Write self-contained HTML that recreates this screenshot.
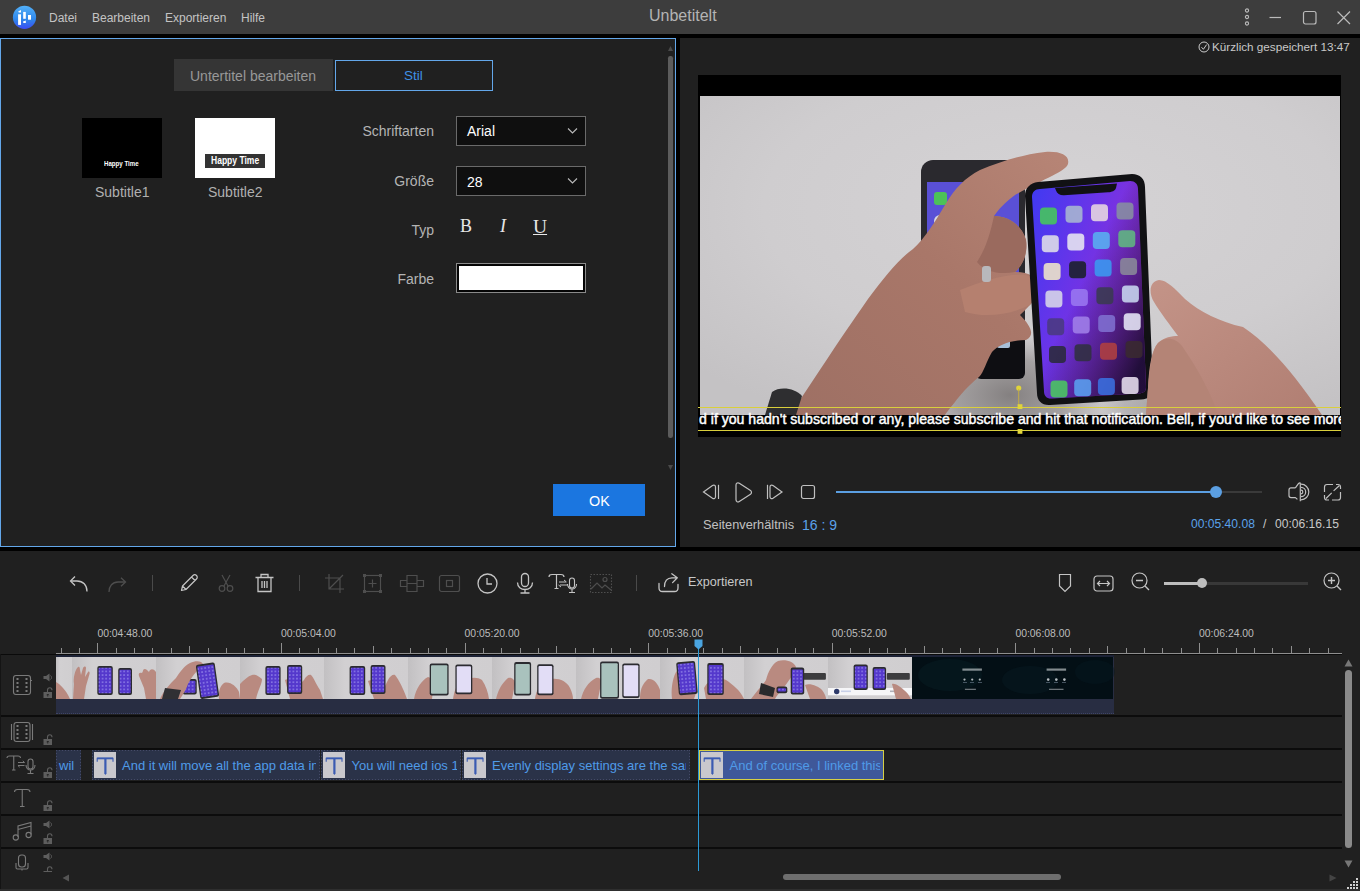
<!DOCTYPE html>
<html><head><meta charset="utf-8">
<style>
*{margin:0;padding:0;box-sizing:border-box}
html,body{width:1360px;height:891px;overflow:hidden;background:#000;font-family:"Liberation Sans",sans-serif}
.a{position:absolute}
.t{position:absolute;white-space:nowrap;line-height:1}
svg{position:absolute;overflow:visible}
</style></head><body>
<!-- TITLE BAR -->
<div class="a" style="left:0;top:0;width:1360px;height:34px;background:#3d3d3d"></div>
<svg style="left:8px;top:2px" width="32" height="30" viewBox="0 0 32 30">
 <defs><linearGradient id="lg" x1="0" y1="0" x2="0" y2="1"><stop offset="0" stop-color="#52b0f8"/><stop offset="0.6" stop-color="#2f86ea"/><stop offset="1" stop-color="#3a4cf4"/></linearGradient></defs>
 <circle cx="16.5" cy="15.3" r="11.6" fill="url(#lg)"/>
 <path d="M10.2 9.4L13 8.1V10.4H10.8Z" fill="#fff"/><rect x="10.1" y="12.3" width="2.9" height="10.6" fill="#fff"/>
 <rect x="15.2" y="9.9" width="2.6" height="6.9" fill="#fff"/><path d="M15 19.6L17.8 18.4V20.9H15.4Z" fill="#fff"/>
 <rect x="20" y="13" width="3" height="4.7" fill="#fff"/>
</svg>
<div class="t" style="left:49px;top:12px;font-size:12px;color:#c4c4c4">Datei</div>
<div class="t" style="left:92px;top:12px;font-size:12px;color:#c4c4c4">Bearbeiten</div>
<div class="t" style="left:165px;top:12px;font-size:12px;color:#c4c4c4">Exportieren</div>
<div class="t" style="left:241px;top:12px;font-size:12px;color:#c4c4c4">Hilfe</div>
<div class="t" style="left:649px;top:8px;font-size:16px;color:#b4b4b4">Unbetitelt</div>
<svg style="left:1240px;top:8px" width="14" height="18"><circle cx="7" cy="2.5" r="1.6" fill="none" stroke="#bbb" stroke-width="1.1"/><circle cx="7" cy="9" r="1.6" fill="none" stroke="#bbb" stroke-width="1.1"/><circle cx="7" cy="15.5" r="1.6" fill="none" stroke="#bbb" stroke-width="1.1"/></svg>
<svg style="left:1268px;top:10px" width="16" height="16"><line x1="1.5" y1="7.5" x2="13" y2="7.5" stroke="#bbb" stroke-width="1.2"/></svg>
<svg style="left:1302px;top:10px" width="16" height="16"><rect x="1.5" y="1.5" width="12.5" height="12.5" rx="2" fill="none" stroke="#bbb" stroke-width="1.2"/></svg>
<svg style="left:1336px;top:10px" width="16" height="16"><path d="M1.5 1.5L14 14M14 1.5L1.5 14" stroke="#bbb" stroke-width="1.2"/></svg>

<!-- LEFT PANEL -->
<div class="a" style="left:0;top:38px;width:676px;height:509px;background:#202020;border:1px solid #63a7ea"></div>
<div class="a" style="left:174px;top:59px;width:159px;height:32px;background:#353535"></div>
<div class="t" style="left:190px;top:69px;font-size:14px;color:#989898">Untertitel bearbeiten</div>
<div class="a" style="left:335px;top:60px;width:158px;height:31px;border:1px solid #63a7ea"></div>
<div class="t" style="left:404px;top:69px;font-size:13.5px;color:#3f90e4">Stil</div>

<div class="a" style="left:82px;top:118px;width:80px;height:60px;background:#000"></div>
<div class="t" style="left:104px;top:160px;font-size:7px;font-weight:bold;color:#fff;transform:scaleX(0.876);transform-origin:0 0">Happy Time</div>
<div class="a" style="left:195px;top:118px;width:80px;height:60px;background:#fff"></div>
<div class="a" style="left:205px;top:154px;width:60px;height:14px;background:#333"></div>
<div class="t" style="left:211px;top:156px;font-size:10.4px;font-weight:bold;color:#fff;transform:scaleX(0.82);transform-origin:0 0">Happy Time</div>
<div class="t" style="left:95px;top:185px;font-size:14px;color:#b0b0b0">Subtitle1</div>
<div class="t" style="left:208px;top:185px;font-size:14px;color:#b0b0b0">Subtitle2</div>

<div class="t" style="right:926px;top:124px;font-size:14px;color:#b4b4b4">Schriftarten</div>
<div class="t" style="right:926px;top:174px;font-size:14px;color:#b4b4b4">Größe</div>
<div class="t" style="right:926px;top:223px;font-size:14px;color:#b4b4b4">Typ</div>
<div class="t" style="right:926px;top:271.5px;font-size:14px;color:#b4b4b4">Farbe</div>

<div class="a" style="left:456px;top:116px;width:130px;height:30px;background:#0f0f0f;border:1px solid #6a6a6a"></div>
<div class="t" style="left:467px;top:124px;font-size:14px;color:#fff">Arial</div>
<svg style="left:567px;top:127px" width="12" height="8"><path d="M1 1.5L5.5 6L10 1.5" fill="none" stroke="#bbb" stroke-width="1.1"/></svg>
<div class="a" style="left:456px;top:166px;width:130px;height:30px;background:#0f0f0f;border:1px solid #6a6a6a"></div>
<div class="t" style="left:467px;top:175px;font-size:14px;color:#fff">28</div>
<svg style="left:567px;top:177px" width="12" height="8"><path d="M1 1.5L5.5 6L10 1.5" fill="none" stroke="#bbb" stroke-width="1.1"/></svg>

<div class="t" style="left:460px;top:217px;font-size:18px;font-family:'Liberation Serif',serif;color:#e8e8e8">B</div>
<div class="t" style="left:500px;top:217px;font-size:18px;font-family:'Liberation Serif',serif;font-style:italic;color:#e8e8e8">I</div>
<div class="t" style="left:533px;top:217px;font-size:19.5px;font-family:'Liberation Serif',serif;text-decoration:underline;color:#e8e8e8">U</div>

<div class="a" style="left:456px;top:263px;width:130px;height:30px;background:#fff;border:1px solid #8a8a8a;box-shadow:inset 0 0 0 2px #050505"></div>

<svg style="left:668px;top:46px" width="6" height="6"><path d="M0 5H5L2.5 0Z" fill="#4a4a4a"/></svg>
<div class="a" style="left:668px;top:56px;width:4.5px;height:382px;border-radius:2.2px;background:#5c5c5c"></div>
<svg style="left:668px;top:465px" width="6" height="6"><path d="M0 0H5L2.5 5Z" fill="#4a4a4a"/></svg>
<div class="a" style="left:553px;top:484px;width:92px;height:32px;background:#1b76e0"></div>
<div class="t" style="left:589px;top:494px;font-size:14.4px;color:#fff">OK</div>

<!-- RIGHT PANEL -->
<div class="a" style="left:680px;top:38px;width:680px;height:509px;background:#202020"></div>
<svg style="left:1198px;top:41px" width="12" height="12"><circle cx="6" cy="6" r="5" fill="none" stroke="#ccc" stroke-width="1"/><path d="M3.5 6.2L5.4 8.3L8.6 3.6" fill="none" stroke="#ccc" stroke-width="1"/></svg>
<div class="t" style="left:1212px;top:41px;font-size:11.7px;color:#c8c8c8">Kürzlich gespeichert 13:47</div>
<div class="a" style="left:698px;top:75px;width:643px;height:362px;background:#000;overflow:hidden">
 <svg id="vid" style="left:2px;top:21px;overflow:hidden" width="640" height="319" viewBox="700 96 640 319">
  <defs>
   <radialGradient id="bg" cx="0.55" cy="0.35" r="0.75"><stop offset="0" stop-color="#d5d3d5"/><stop offset="0.6" stop-color="#cfcdcf"/><stop offset="1" stop-color="#c4c2c4"/></radialGradient><radialGradient id="shd" cx="0.5" cy="0.5" r="0.5"><stop offset="0" stop-color="#7c7878" stop-opacity="0.9"/><stop offset="0.6" stop-color="#8a8686" stop-opacity="0.6"/><stop offset="1" stop-color="#9a9696" stop-opacity="0"/></radialGradient>
   <linearGradient id="scr" x1="0" y1="0" x2="1" y2="0.6"><stop offset="0" stop-color="#3f3af2"/><stop offset="0.45" stop-color="#6a34e8"/><stop offset="1" stop-color="#9a2fd0"/></linearGradient>
   <linearGradient id="scrd" x1="0.1" y1="0.2" x2="0.9" y2="0.9"><stop offset="0.4" stop-color="#120c30" stop-opacity="0"/><stop offset="1" stop-color="#0c0820" stop-opacity="0.85"/></linearGradient>
   <linearGradient id="skin" x1="0" y1="1" x2="1" y2="0"><stop offset="0" stop-color="#9e7064"/><stop offset="0.55" stop-color="#a97769"/><stop offset="1" stop-color="#b78576"/></linearGradient>
   <linearGradient id="skin2" x1="0" y1="0" x2="1" y2="1"><stop offset="0" stop-color="#c49488"/><stop offset="1" stop-color="#b07e72"/></linearGradient>
  </defs>
  <rect x="700" y="96" width="640" height="319" fill="url(#bg)"/><ellipse cx="1010" cy="395" rx="95" ry="60" fill="url(#shd)"/><ellipse cx="1160" cy="405" rx="60" ry="25" fill="url(#shd)" opacity="0.5"/>
  <!-- back phone -->
  <rect x="921" y="160" width="104" height="218" rx="12" fill="#2a292e"/>
  <rect x="927" y="182" width="92" height="180" fill="#5a50d6"/>
  <rect x="934" y="192" width="13" height="13" rx="3" fill="#4cc258"/>
  <rect x="1000" y="186" width="12" height="12" rx="3" fill="#8a8a9a"/>
  <rect x="934" y="215" width="12" height="12" rx="6" fill="#d8d8e0"/>
  <rect x="975" y="336" width="50" height="43" rx="6" fill="#0e0e12"/>
  <rect x="997" y="340" width="13" height="8" rx="2" fill="#a8c0d8"/>
  <!-- left hand -->
  <path d="M790 415 L800 400 C815 378 835 346 868 299 C885 276 900 258 913 249 C925 238 935 222 945 205 C955 188 965 178 980 170 C1000 162 1020 155 1045 152 C1060 151 1070 155 1068 164 C1065 172 1045 178 1015 195 C1005 202 998 210 994 216 C1008 216 1022 225 1026 240 C1028 255 1022 266 1015 272 C1030 272 1040 278 1038 290 C1035 302 1025 310 1020 315 C1030 325 1036 335 1026 340 C1010 340 998 345 992 352 C986 362 984 372 979 377 C968 386 960 395 955 402 C950 408 947 412 945 415 Z" fill="url(#skin)"/>
  <path d="M994 216 C1008 216 1022 225 1026 240 C1028 255 1022 266 1015 272 C1000 275 985 272 977 262 C985 250 990 235 994 216Z" fill="#9a6a5e"/>
  <path d="M960 290 C990 278 1015 272 1030 276 C1040 282 1040 295 1030 305 C1010 315 985 318 965 312Z" fill="#b5806f"/>
  <rect x="982" y="266" width="9" height="16" rx="3" fill="#b8b8bc"/>
  <path d="M765 415 L772 392 C780 386 795 388 802 396 L796 415Z" fill="#2e2e30"/>
  <!-- front phone -->
  <path d="M1038 182 L1132 174 C1140 174 1145 179 1145 187 L1153 388 C1153 396 1149 399 1141 399.5 L1050 405 C1042 405.5 1037 401 1037 393 L1025 196 C1025 188 1030 183 1038 182Z" fill="#111114"/>
  <path d="M1040 189 L1130 181 C1135 181 1138 184 1138 189 L1146 387 C1146 391 1144 393 1139 393.5 L1052 398.5 C1047 399 1044 396 1044 391 L1032 197 C1032 192 1035 189 1040 189Z" fill="url(#scr)"/>
  <path d="M1040 189 L1130 181 C1135 181 1138 184 1138 189 L1146 387 C1146 391 1144 393 1139 393.5 L1052 398.5 C1047 399 1044 396 1044 391 L1032 197 C1032 192 1035 189 1040 189Z" fill="url(#scrd)"/>
  <path d="M1055 188 L1117 183.5 L1116 188 C1115 191 1112 192 1108 192.3 L1064 195.3 C1060 195.5 1057 193.5 1056 190.5Z" fill="#111114"/>
  <g id="icons"><rect x="1040.0" y="207.5" width="17" height="17" rx="4" fill="#46c85a" opacity="0.88"/><rect x="1065.5" y="205.8" width="17" height="17" rx="4" fill="#a8b8d0" opacity="0.88"/><rect x="1091.0" y="204.2" width="17" height="17" rx="4" fill="#e8d8e0" opacity="0.88"/><rect x="1116.5" y="202.5" width="17" height="17" rx="4" fill="#8890a0" opacity="0.88"/><rect x="1041.8" y="235.2" width="17" height="17" rx="4" fill="#e0e0e8" opacity="0.88"/><rect x="1067.3" y="233.5" width="17" height="17" rx="4" fill="#e8e8f0" opacity="0.88"/><rect x="1092.8" y="231.9" width="17" height="17" rx="4" fill="#58b0f0" opacity="0.88"/><rect x="1118.3" y="230.2" width="17" height="17" rx="4" fill="#60b880" opacity="0.88"/><rect x="1043.6" y="262.9" width="17" height="17" rx="4" fill="#f0e8c8" opacity="0.88"/><rect x="1069.1" y="261.2" width="17" height="17" rx="4" fill="#1a2028" opacity="0.88"/><rect x="1094.6" y="259.6" width="17" height="17" rx="4" fill="#3a9af0" opacity="0.88"/><rect x="1120.1" y="257.9" width="17" height="17" rx="4" fill="#8a8a98" opacity="0.88"/><rect x="1045.4" y="290.6" width="17" height="17" rx="4" fill="#d8d8e8" opacity="0.88"/><rect x="1070.9" y="288.9" width="17" height="17" rx="4" fill="#9a78f0" opacity="0.88"/><rect x="1096.4" y="287.3" width="17" height="17" rx="4" fill="#3a3a50" opacity="0.88"/><rect x="1121.9" y="285.6" width="17" height="17" rx="4" fill="#c8d8f0" opacity="0.88"/><rect x="1047.2" y="318.3" width="17" height="17" rx="4" fill="#4a3a80" opacity="0.88"/><rect x="1072.7" y="316.6" width="17" height="17" rx="4" fill="#a080e8" opacity="0.88"/><rect x="1098.2" y="315.0" width="17" height="17" rx="4" fill="#8070d0" opacity="0.88"/><rect x="1123.7" y="313.3" width="17" height="17" rx="4" fill="#e8e8f8" opacity="0.88"/><rect x="1049.0" y="346.0" width="17" height="17" rx="4" fill="#2a2a3a" opacity="0.88"/><rect x="1074.5" y="344.3" width="17" height="17" rx="4" fill="#303040" opacity="0.88"/><rect x="1100.0" y="342.7" width="17" height="17" rx="4" fill="#b04040" opacity="0.88"/><rect x="1125.5" y="341.0" width="17" height="17" rx="4" fill="#3a2a30" opacity="0.88"/><rect x="1050.5" y="380.5" width="17" height="17" rx="4" fill="#4ac860" opacity="0.88"/><rect x="1074.2" y="379.3" width="17" height="17" rx="4" fill="#5aa0f0" opacity="0.88"/><rect x="1097.9" y="378.1" width="17" height="17" rx="4" fill="#3a70e0" opacity="0.88"/><rect x="1121.6" y="376.9" width="17" height="17" rx="4" fill="#e8e0f0" opacity="0.88"/></g>
  <!-- right hand -->
  <path d="M1146 415 L1148 388 C1149 365 1152 350 1158 343 C1164 337 1172 336 1178 336 C1170 325 1160 312 1154 302 C1148 292 1150 281 1159 280 C1167 280 1175 289 1185 299 C1200 312 1220 322 1243 327 C1270 345 1295 375 1322 415Z" fill="url(#skin2)"/>
  <path d="M1146 415 L1148 388 C1150 365 1152 350 1158 343 C1166 336 1176 338 1182 346 C1195 365 1210 390 1218 415Z" fill="#b48476"/>
 </svg>
 <div class="a" style="left:0;top:332px;width:643px;height:1px;background:#d9cf3c"></div>
 <div class="a" style="left:0;top:355px;width:643px;height:1px;background:#d9cf3c"></div>
 <div class="t" style="left:1px;top:337px;font-size:14.1px;color:#fff;-webkit-text-stroke:0.45px #fff">d if you hadn't subscribed or any, please subscribe and hit that notification. Bell, if you'd like to see more</div>
</div>
<svg style="left:1014px;top:383px" width="12" height="52"><circle cx="4.7" cy="5" r="2.6" fill="#e0d43a"/><line x1="4.7" y1="6" x2="4.7" y2="22" stroke="#c8b040" stroke-width="0.9"/><rect x="3.6" y="21.2" width="4.8" height="4.8" fill="#e0d43a"/><rect x="3.6" y="46" width="4.8" height="4.8" fill="#e0d43a"/></svg>
<!-- controls -->
<svg style="left:700px;top:482px" width="120" height="22">
 <path d="M3.5 9.9L12.5 3.6C14 2.6 15.5 3.4 15.5 5V14.8C15.5 16.4 14 17.2 12.5 16.2L3.5 9.9Z" fill="none" stroke="#c0c0c0" stroke-width="1.2" transform="translate(0,0)"/>
 <line x1="18.5" y1="2.8" x2="18.5" y2="17" stroke="#c0c0c0" stroke-width="1.2"/>
</svg>
<svg style="left:733px;top:481px" width="22" height="24"><path d="M3 4C3 2.2 4.8 1.2 6.3 2.2L17.5 9.6C18.8 10.5 18.8 12.3 17.5 13.2L6.3 20.6C4.8 21.6 3 20.6 3 18.8Z" fill="none" stroke="#c0c0c0" stroke-width="1.2"/></svg>
<svg style="left:765px;top:482px" width="22" height="22"><line x1="2.5" y1="2.8" x2="2.5" y2="17" stroke="#c0c0c0" stroke-width="1.2"/><path d="M17 9.9L8 3.6C6.5 2.6 5 3.4 5 5V14.8C5 16.4 6.5 17.2 8 16.2L17 9.9Z" fill="none" stroke="#c0c0c0" stroke-width="1.2"/></svg>
<svg style="left:800px;top:484px" width="18" height="18"><rect x="1.5" y="1.5" width="13" height="13" rx="2" fill="none" stroke="#c0c0c0" stroke-width="1.2"/></svg>
<div class="a" style="left:836px;top:491px;width:380px;height:2px;background:#5b9fe2"></div>
<div class="a" style="left:1216px;top:491px;width:46px;height:2px;background:#3a3a3a"></div>
<div class="a" style="left:1210px;top:486px;width:12px;height:12px;border-radius:50%;background:#5b9fe2"></div>
<svg style="left:1287px;top:481px" width="26" height="24" viewBox="0 0 26 24"><path d="M8.4 6.9L11.6 2.4Q12.4 1.6 13.3 2V20.2M8.4 6.9H4Q2 6.9 2 8.9V14.6Q2 16.6 4 16.6H8.4L10.4 18.4" fill="none" stroke="#c0c0c0" stroke-width="1.2" stroke-linejoin="round"/><path d="M14 9.2A1.8 1.8 0 0 1 14 12.8M14 6.3A4.7 4.7 0 0 1 14 15.7M14 3.2A7.8 7.8 0 0 1 14 18.8" fill="none" stroke="#c0c0c0" stroke-width="1.2"/></svg>
<svg style="left:1323px;top:483px" width="20" height="19" viewBox="0 0 20 19"><path d="M10 1.5H4Q1.5 1.5 1.5 4V9M1.5 12V14.5Q1.5 17 4 17H6M9 17H15Q17.5 17 17.5 14.5V9M17.5 6V4Q17.5 1.5 15 1.5H13" fill="none" stroke="#c0c0c0" stroke-width="1.2"/><path d="M3 15.5L8.7 9.8M10.6 7.9L16.2 2.8" fill="none" stroke="#c0c0c0" stroke-width="1.2"/></svg>
<div class="t" style="left:703px;top:519px;font-size:12.8px;color:#c0c0c0">Seitenverhältnis</div>
<div class="t" style="left:802px;top:518px;font-size:14px;color:#5aa2ea">16 : 9</div>
<div class="t" style="left:1191px;top:518px;font-size:12.1px;color:#5aa2ea">00:05:40.08</div>
<div class="t" style="left:1263px;top:518px;font-size:12.1px;color:#c8c8c8">/</div>
<div class="t" style="left:1275px;top:518px;font-size:12.1px;color:#c8c8c8">00:06:16.15</div>

<!-- BOTTOM AREA -->
<div class="a" style="left:0;top:551px;width:1360px;height:340px;background:#202020"></div>
<svg style="left:68px;top:573px" width="22" height="20" viewBox="0 0 22 20"><path d="M19 18.5C19 12 15 8 9 8H3" fill="none" stroke="#c4c4c4" stroke-width="1.3"/><path d="M7 3.5L2.5 8L7 12.5" fill="none" stroke="#c4c4c4" stroke-width="1.3"/></svg>
<svg style="left:107px;top:575px" width="22" height="18" viewBox="0 0 22 18"><path d="M2 17C2 11 5.5 7 11 7H18" fill="none" stroke="#4e4e4e" stroke-width="1.3"/><path d="M14 2.8L18.5 7L14 11.2" fill="none" stroke="#4e4e4e" stroke-width="1.3"/></svg>
<div class="a" style="left:152px;top:575px;width:1px;height:16px;background:#4a4a4a"></div>
<svg style="left:179px;top:573px" width="20" height="20" viewBox="0 0 20 20"><path d="M2.5 17.5L3.5 13L14 2.5C15 1.5 16.5 1.5 17.5 2.5C18.5 3.5 18.5 5 17.5 6L7 16.5Z M12.5 4L16 7.5 M3.5 13L7 16.5" fill="none" stroke="#c4c4c4" stroke-width="1.2" stroke-linejoin="round"/></svg>
<svg style="left:217px;top:573px" width="18" height="20" viewBox="0 0 18 20"><path d="M5 2L11 13M13 2L7 13" fill="none" stroke="#4e4e4e" stroke-width="1.2"/><circle cx="5" cy="15.5" r="2.8" fill="none" stroke="#4e4e4e" stroke-width="1.2"/><circle cx="13" cy="15.5" r="2.8" fill="none" stroke="#4e4e4e" stroke-width="1.2"/></svg>
<svg style="left:254px;top:572px" width="22" height="21" viewBox="0 0 22 21"><path d="M1.5 5.5H19.5M7 5.5V2.5H14V5.5M4 5.5V19.5H17V5.5M8 9V16M10.5 9V16M13 9V16" fill="none" stroke="#c4c4c4" stroke-width="1.3"/></svg>
<div class="a" style="left:299px;top:575px;width:1px;height:16px;background:#4a4a4a"></div>
<svg style="left:324px;top:573px" width="22" height="21" viewBox="0 0 22 21"><path d="M5 1V16H20M1 5H16V20M19 2L5 16" fill="none" stroke="#4e4e4e" stroke-width="1.2"/></svg>
<svg style="left:362px;top:573px" width="22" height="21" viewBox="0 0 22 21"><rect x="2.5" y="2.5" width="16" height="16" fill="none" stroke="#4e4e4e" stroke-width="1.2"/><rect x="1" y="1" width="3" height="3" fill="#4e4e4e"/><rect x="17" y="1" width="3" height="3" fill="#4e4e4e"/><rect x="1" y="17" width="3" height="3" fill="#4e4e4e"/><rect x="17" y="17" width="3" height="3" fill="#4e4e4e"/><path d="M10.5 6.5V14.5M6.5 10.5H14.5" stroke="#4e4e4e" stroke-width="1.2"/></svg>
<svg style="left:399px;top:574px" width="26" height="19" viewBox="0 0 26 19"><path d="M8 1.5H18V6.5H24.5V12.5H18V17.5H8V12.5H1.5V6.5H8Z M8 6.5V12.5 M18 6.5V12.5 M8 9.5H18" fill="none" stroke="#4e4e4e" stroke-width="1.2"/></svg>
<svg style="left:438px;top:574px" width="23" height="19" viewBox="0 0 23 19"><rect x="1.5" y="1.5" width="20" height="16" rx="2" fill="none" stroke="#4e4e4e" stroke-width="1.2"/><rect x="8.5" y="6.5" width="6" height="6" fill="none" stroke="#4e4e4e" stroke-width="1.2"/></svg>
<svg style="left:476px;top:573px" width="23" height="21" viewBox="0 0 23 21"><circle cx="11.5" cy="10.5" r="9.5" fill="none" stroke="#c4c4c4" stroke-width="1.3"/><path d="M11 5V11H16" fill="none" stroke="#c4c4c4" stroke-width="1.3"/></svg>
<svg style="left:516px;top:572px" width="18" height="22" viewBox="0 0 18 22"><rect x="5.5" y="1.5" width="7" height="13" rx="3.5" fill="none" stroke="#c4c4c4" stroke-width="1.3"/><path d="M1.5 10.5C1.5 15 5 17.5 9 17.5C13 17.5 16.5 15 16.5 10.5M9 17.5V21M4.5 21H13.5" fill="none" stroke="#c4c4c4" stroke-width="1.3"/></svg>
<svg style="left:548px;top:573px" width="31" height="21" viewBox="0 0 31 21"><path d="M1 4C1 2 2 1.5 4 1.5H13C15 1.5 16 2 16 4M8.5 1.5V15.5M6.5 15.5H10.5" fill="none" stroke="#c4c4c4" stroke-width="1.2"/><path d="M11 9H18M16 7L18.5 9M12 12H19M13 14L10.5 12" fill="none" stroke="#c4c4c4" stroke-width="1"/><rect x="21.5" y="5" width="5" height="10" rx="2.5" fill="none" stroke="#c4c4c4" stroke-width="1.1"/><path d="M19.5 11C19.5 14 21.5 16 24 16C26.5 16 28.5 14 28.5 11M24 16V19.5M21 19.5H27" fill="none" stroke="#c4c4c4" stroke-width="1.1"/></svg>
<svg style="left:589px;top:573px" width="24" height="21" viewBox="0 0 24 21"><rect x="1.5" y="1.5" width="21" height="18" fill="none" stroke="#4e4e4e" stroke-width="1.1" stroke-dasharray="1.5 1.5"/><path d="M2 16L8 10L13 15L16 12L22 17" fill="none" stroke="#4e4e4e" stroke-width="1.2"/><circle cx="16" cy="6.5" r="2" fill="none" stroke="#4e4e4e" stroke-width="1.2"/></svg>
<div class="a" style="left:636px;top:575px;width:1px;height:16px;background:#4a4a4a"></div>
<svg style="left:657px;top:572px" width="23" height="22" viewBox="0 0 23 22"><path d="M2 11.5V16Q2 19.5 5.5 19.5H17.5Q21 19.5 21 16V12.5" fill="none" stroke="#c4c4c4" stroke-width="1.3" stroke-linecap="round"/><path d="M7.5 14.5C7.5 9.5 10 5.8 15 5.8H20M14.8 1.8L20.3 5.8L15.6 10.6" fill="none" stroke="#c4c4c4" stroke-width="1.3" stroke-linecap="round" stroke-linejoin="round"/></svg>
<div class="t" style="left:688px;top:576px;font-size:12.6px;color:#c8c8c8">Exportieren</div>
<svg style="left:1058px;top:573px" width="14" height="20" viewBox="0 0 14 20"><path d="M1.5 1.5H12.5V13L7 18.5L1.5 13Z" fill="none" stroke="#c4c4c4" stroke-width="1.2"/></svg>
<svg style="left:1093px;top:575px" width="21" height="17" viewBox="0 0 21 17"><rect x="1" y="1" width="19" height="15" rx="3" fill="none" stroke="#c4c4c4" stroke-width="1.2"/><path d="M4.5 8.5H16.5M7 6L4.5 8.5L7 11M14 6L16.5 8.5L14 11" fill="none" stroke="#c4c4c4" stroke-width="1.2"/></svg>
<svg style="left:1131px;top:572px" width="20" height="20" viewBox="0 0 20 20"><circle cx="8.5" cy="8.5" r="7.5" fill="none" stroke="#c4c4c4" stroke-width="1.2"/><path d="M5 8.5H12M14 14L18 18" fill="none" stroke="#c4c4c4" stroke-width="1.4"/></svg>
<div class="a" style="left:1164px;top:582px;width:38px;height:3px;background:#bdbdbd"></div>
<div class="a" style="left:1202px;top:582px;width:106px;height:3px;background:#383838"></div>
<div class="a" style="left:1197px;top:578px;width:10px;height:10px;border-radius:50%;background:#bdbdbd"></div>
<svg style="left:1323px;top:572px" width="20" height="20" viewBox="0 0 20 20"><circle cx="8.5" cy="8.5" r="7.5" fill="none" stroke="#c4c4c4" stroke-width="1.2"/><path d="M5 8.5H12M8.5 5V12M14 14L18 18" fill="none" stroke="#c4c4c4" stroke-width="1.4"/></svg>
<div class="t" style="left:97.4px;top:629px;font-size:10.4px;color:#bdbdbd">00:04:48.00</div>
<div class="t" style="left:281.0px;top:629px;font-size:10.4px;color:#bdbdbd">00:05:04.00</div>
<div class="t" style="left:464.6px;top:629px;font-size:10.4px;color:#bdbdbd">00:05:20.00</div>
<div class="t" style="left:648.2px;top:629px;font-size:10.4px;color:#bdbdbd">00:05:36.00</div>
<div class="t" style="left:831.8px;top:629px;font-size:10.4px;color:#bdbdbd">00:05:52.00</div>
<div class="t" style="left:1015.4px;top:629px;font-size:10.4px;color:#bdbdbd">00:06:08.00</div>
<div class="t" style="left:1199.0px;top:629px;font-size:10.4px;color:#bdbdbd">00:06:24.00</div>
<div class="a" style="left:56px;top:653px;width:1286px;height:1px;background:#8e8e8e"></div>
<div class="a" style="left:61px;top:648px;width:1px;height:5px;background:#8e8e8e"></div>
<div class="a" style="left:79px;top:648px;width:1px;height:5px;background:#8e8e8e"></div>
<div class="a" style="left:97px;top:643px;width:1px;height:10px;background:#8e8e8e"></div>
<div class="a" style="left:116px;top:648px;width:1px;height:5px;background:#8e8e8e"></div>
<div class="a" style="left:134px;top:648px;width:1px;height:5px;background:#8e8e8e"></div>
<div class="a" style="left:152px;top:648px;width:1px;height:5px;background:#8e8e8e"></div>
<div class="a" style="left:171px;top:648px;width:1px;height:5px;background:#8e8e8e"></div>
<div class="a" style="left:189px;top:646px;width:1px;height:7px;background:#8e8e8e"></div>
<div class="a" style="left:208px;top:648px;width:1px;height:5px;background:#8e8e8e"></div>
<div class="a" style="left:226px;top:648px;width:1px;height:5px;background:#8e8e8e"></div>
<div class="a" style="left:244px;top:648px;width:1px;height:5px;background:#8e8e8e"></div>
<div class="a" style="left:263px;top:648px;width:1px;height:5px;background:#8e8e8e"></div>
<div class="a" style="left:281px;top:643px;width:1px;height:10px;background:#8e8e8e"></div>
<div class="a" style="left:299px;top:648px;width:1px;height:5px;background:#8e8e8e"></div>
<div class="a" style="left:318px;top:648px;width:1px;height:5px;background:#8e8e8e"></div>
<div class="a" style="left:336px;top:648px;width:1px;height:5px;background:#8e8e8e"></div>
<div class="a" style="left:354px;top:648px;width:1px;height:5px;background:#8e8e8e"></div>
<div class="a" style="left:373px;top:646px;width:1px;height:7px;background:#8e8e8e"></div>
<div class="a" style="left:391px;top:648px;width:1px;height:5px;background:#8e8e8e"></div>
<div class="a" style="left:410px;top:648px;width:1px;height:5px;background:#8e8e8e"></div>
<div class="a" style="left:428px;top:648px;width:1px;height:5px;background:#8e8e8e"></div>
<div class="a" style="left:446px;top:648px;width:1px;height:5px;background:#8e8e8e"></div>
<div class="a" style="left:465px;top:643px;width:1px;height:10px;background:#8e8e8e"></div>
<div class="a" style="left:483px;top:648px;width:1px;height:5px;background:#8e8e8e"></div>
<div class="a" style="left:501px;top:648px;width:1px;height:5px;background:#8e8e8e"></div>
<div class="a" style="left:520px;top:648px;width:1px;height:5px;background:#8e8e8e"></div>
<div class="a" style="left:538px;top:648px;width:1px;height:5px;background:#8e8e8e"></div>
<div class="a" style="left:556px;top:646px;width:1px;height:7px;background:#8e8e8e"></div>
<div class="a" style="left:575px;top:648px;width:1px;height:5px;background:#8e8e8e"></div>
<div class="a" style="left:593px;top:648px;width:1px;height:5px;background:#8e8e8e"></div>
<div class="a" style="left:611px;top:648px;width:1px;height:5px;background:#8e8e8e"></div>
<div class="a" style="left:630px;top:648px;width:1px;height:5px;background:#8e8e8e"></div>
<div class="a" style="left:648px;top:643px;width:1px;height:10px;background:#8e8e8e"></div>
<div class="a" style="left:667px;top:648px;width:1px;height:5px;background:#8e8e8e"></div>
<div class="a" style="left:685px;top:648px;width:1px;height:5px;background:#8e8e8e"></div>
<div class="a" style="left:703px;top:648px;width:1px;height:5px;background:#8e8e8e"></div>
<div class="a" style="left:722px;top:648px;width:1px;height:5px;background:#8e8e8e"></div>
<div class="a" style="left:740px;top:646px;width:1px;height:7px;background:#8e8e8e"></div>
<div class="a" style="left:758px;top:648px;width:1px;height:5px;background:#8e8e8e"></div>
<div class="a" style="left:777px;top:648px;width:1px;height:5px;background:#8e8e8e"></div>
<div class="a" style="left:795px;top:648px;width:1px;height:5px;background:#8e8e8e"></div>
<div class="a" style="left:813px;top:648px;width:1px;height:5px;background:#8e8e8e"></div>
<div class="a" style="left:832px;top:643px;width:1px;height:10px;background:#8e8e8e"></div>
<div class="a" style="left:850px;top:648px;width:1px;height:5px;background:#8e8e8e"></div>
<div class="a" style="left:869px;top:648px;width:1px;height:5px;background:#8e8e8e"></div>
<div class="a" style="left:887px;top:648px;width:1px;height:5px;background:#8e8e8e"></div>
<div class="a" style="left:905px;top:648px;width:1px;height:5px;background:#8e8e8e"></div>
<div class="a" style="left:924px;top:646px;width:1px;height:7px;background:#8e8e8e"></div>
<div class="a" style="left:942px;top:648px;width:1px;height:5px;background:#8e8e8e"></div>
<div class="a" style="left:960px;top:648px;width:1px;height:5px;background:#8e8e8e"></div>
<div class="a" style="left:979px;top:648px;width:1px;height:5px;background:#8e8e8e"></div>
<div class="a" style="left:997px;top:648px;width:1px;height:5px;background:#8e8e8e"></div>
<div class="a" style="left:1015px;top:643px;width:1px;height:10px;background:#8e8e8e"></div>
<div class="a" style="left:1034px;top:648px;width:1px;height:5px;background:#8e8e8e"></div>
<div class="a" style="left:1052px;top:648px;width:1px;height:5px;background:#8e8e8e"></div>
<div class="a" style="left:1070px;top:648px;width:1px;height:5px;background:#8e8e8e"></div>
<div class="a" style="left:1089px;top:648px;width:1px;height:5px;background:#8e8e8e"></div>
<div class="a" style="left:1107px;top:646px;width:1px;height:7px;background:#8e8e8e"></div>
<div class="a" style="left:1126px;top:648px;width:1px;height:5px;background:#8e8e8e"></div>
<div class="a" style="left:1144px;top:648px;width:1px;height:5px;background:#8e8e8e"></div>
<div class="a" style="left:1162px;top:648px;width:1px;height:5px;background:#8e8e8e"></div>
<div class="a" style="left:1181px;top:648px;width:1px;height:5px;background:#8e8e8e"></div>
<div class="a" style="left:1199px;top:643px;width:1px;height:10px;background:#8e8e8e"></div>
<div class="a" style="left:1217px;top:648px;width:1px;height:5px;background:#8e8e8e"></div>
<div class="a" style="left:1236px;top:648px;width:1px;height:5px;background:#8e8e8e"></div>
<div class="a" style="left:1254px;top:648px;width:1px;height:5px;background:#8e8e8e"></div>
<div class="a" style="left:1272px;top:648px;width:1px;height:5px;background:#8e8e8e"></div>
<div class="a" style="left:1291px;top:646px;width:1px;height:7px;background:#8e8e8e"></div>
<div class="a" style="left:1309px;top:648px;width:1px;height:5px;background:#8e8e8e"></div>
<div class="a" style="left:1328px;top:648px;width:1px;height:5px;background:#8e8e8e"></div>
<div class="a" style="left:0;top:654px;width:1342px;height:1px;background:#0a0a0a"></div>
<div class="a" style="left:0;top:715px;width:1342px;height:2px;background:#0c0c0c"></div>
<div class="a" style="left:0;top:748px;width:1342px;height:2px;background:#0c0c0c"></div>
<div class="a" style="left:0;top:781px;width:1342px;height:2px;background:#0c0c0c"></div>
<div class="a" style="left:0;top:814px;width:1342px;height:2px;background:#0c0c0c"></div>
<div class="a" style="left:0;top:847px;width:1342px;height:2px;background:#0c0c0c"></div>
<div class="a" style="left:0;top:654px;width:1px;height:237px;background:#141414"></div>
<!-- TRACKS -->
<svg style="left:12px;top:674px" width="21" height="22" viewBox="0 0 21 22"><rect x="1.5" y="1.5" width="17" height="19" rx="2.5" fill="none" stroke="#7a7a7a" stroke-width="1.1"/><g fill="#7a7a7a"><rect x="4.5" y="4" width="2" height="2"/><rect x="4.5" y="8" width="2" height="2"/><rect x="4.5" y="12" width="2" height="2"/><rect x="4.5" y="16" width="2" height="2"/><rect x="13.5" y="4" width="2" height="2"/><rect x="13.5" y="8" width="2" height="2"/><rect x="13.5" y="12" width="2" height="2"/><rect x="13.5" y="16" width="2" height="2"/></g><path d="M18.5 5.5L20 7" stroke="#7a7a7a" stroke-width="1"/></svg>
<svg style="left:43px;top:673px" width="10" height="9" viewBox="0 0 10 9"><path d="M0.5 3H3L6.5 0.5V8.5L3 6H0.5Z" fill="#5e5e5e"/><path d="M7.5 2.5A2.5 2.5 0 0 1 7.5 6.5" fill="none" stroke="#5e5e5e" stroke-width="1"/></svg>
<svg style="left:43px;top:687px" width="10" height="11" viewBox="0 0 10 11"><path d="M4.5 5V3.2C4.5 1.6 5.6 0.8 6.8 0.8C8 0.8 9 1.6 9 3.2" fill="none" stroke="#5e5e5e" stroke-width="1.1"/><rect x="0.5" y="5" width="8.5" height="6" fill="#5e5e5e"/><path d="M4.75 9.5V7.3M3.6 8.2L4.75 7L5.9 8.2" fill="none" stroke="#202020" stroke-width="0.9"/></svg>
<svg style="left:10px;top:721px" width="24" height="22" viewBox="0 0 24 22"><rect x="4" y="1.5" width="16" height="19" rx="2.5" fill="none" stroke="#7a7a7a" stroke-width="1.1"/><path d="M1.5 3V19M22.5 3V19" stroke="#7a7a7a" stroke-width="1.1"/><g fill="#7a7a7a"><rect x="6.5" y="4" width="2" height="2"/><rect x="6.5" y="8" width="2" height="2"/><rect x="6.5" y="12" width="2" height="2"/><rect x="6.5" y="16" width="2" height="2"/><rect x="15.5" y="4" width="2" height="2"/><rect x="15.5" y="8" width="2" height="2"/><rect x="15.5" y="12" width="2" height="2"/><rect x="15.5" y="16" width="2" height="2"/></g></svg>
<svg style="left:43px;top:734px" width="10" height="11" viewBox="0 0 10 11"><path d="M4.5 5V3.2C4.5 1.6 5.6 0.8 6.8 0.8C8 0.8 9 1.6 9 3.2" fill="none" stroke="#5e5e5e" stroke-width="1.1"/><rect x="0.5" y="5" width="8.5" height="6" fill="#5e5e5e"/><path d="M4.75 9.5V7.3M3.6 8.2L4.75 7L5.9 8.2" fill="none" stroke="#202020" stroke-width="0.9"/></svg>
<svg style="left:6px;top:755px" width="32" height="21" viewBox="0 0 32 21"><path d="M1 3C1 1.5 2 1 3.5 1H12C13.5 1 14.5 1.5 14.5 3M7.75 1V15M6 15H9.5" fill="none" stroke="#7a7a7a" stroke-width="1.1"/><path d="M12 7.5H18.5M16.8 5.8L18.6 7.5M12 10.5H18.5M13.7 12.2L11.9 10.5" fill="none" stroke="#7a7a7a" stroke-width="1"/><rect x="22" y="4" width="5" height="10" rx="2.5" fill="none" stroke="#7a7a7a" stroke-width="1.1"/><path d="M20 10C20 13 22 15 24.5 15C27 15 29 13 29 10M24.5 15V18.5M21.5 18.5H27.5" fill="none" stroke="#7a7a7a" stroke-width="1.1"/></svg>
<svg style="left:43px;top:767px" width="10" height="11" viewBox="0 0 10 11"><path d="M4.5 5V3.2C4.5 1.6 5.6 0.8 6.8 0.8C8 0.8 9 1.6 9 3.2" fill="none" stroke="#5e5e5e" stroke-width="1.1"/><rect x="0.5" y="5" width="8.5" height="6" fill="#5e5e5e"/><path d="M4.75 9.5V7.3M3.6 8.2L4.75 7L5.9 8.2" fill="none" stroke="#202020" stroke-width="0.9"/></svg>
<svg style="left:13px;top:788px" width="20" height="20" viewBox="0 0 20 20"><path d="M1.5 4C1.5 2 2.5 1.5 4.5 1.5H14C16 1.5 17 2 17 4M9.25 1.5V18.5M7 18.5H11.5" fill="none" stroke="#7a7a7a" stroke-width="1.1"/></svg>
<svg style="left:43px;top:800px" width="10" height="11" viewBox="0 0 10 11"><path d="M4.5 5V3.2C4.5 1.6 5.6 0.8 6.8 0.8C8 0.8 9 1.6 9 3.2" fill="none" stroke="#5e5e5e" stroke-width="1.1"/><rect x="0.5" y="5" width="8.5" height="6" fill="#5e5e5e"/><path d="M4.75 9.5V7.3M3.6 8.2L4.75 7L5.9 8.2" fill="none" stroke="#202020" stroke-width="0.9"/></svg>
<svg style="left:12px;top:821px" width="21" height="21" viewBox="0 0 21 21"><path d="M6 16V5L19 1.5V13.5M6 8.5L19 5" fill="none" stroke="#7a7a7a" stroke-width="1.1"/><circle cx="3.8" cy="16.5" r="2.6" fill="none" stroke="#7a7a7a" stroke-width="1.1"/><circle cx="16.6" cy="14" r="2.6" fill="none" stroke="#7a7a7a" stroke-width="1.1"/></svg>
<svg style="left:43px;top:820px" width="10" height="9" viewBox="0 0 10 9"><path d="M0.5 3H3L6.5 0.5V8.5L3 6H0.5Z" fill="#5e5e5e"/><path d="M7.5 2.5A2.5 2.5 0 0 1 7.5 6.5" fill="none" stroke="#5e5e5e" stroke-width="1"/></svg>
<svg style="left:43px;top:833px" width="10" height="11" viewBox="0 0 10 11"><path d="M4.5 5V3.2C4.5 1.6 5.6 0.8 6.8 0.8C8 0.8 9 1.6 9 3.2" fill="none" stroke="#5e5e5e" stroke-width="1.1"/><rect x="0.5" y="5" width="8.5" height="6" fill="#5e5e5e"/><path d="M4.75 9.5V7.3M3.6 8.2L4.75 7L5.9 8.2" fill="none" stroke="#202020" stroke-width="0.9"/></svg>
<div class="a" style="left:0;top:849px;width:56px;height:22.5px;overflow:hidden">
<svg style="left:15px;top:5px" width="16" height="17" viewBox="0 0 16 17"><rect x="3.5" y="1" width="7" height="12" rx="3" fill="none" stroke="#7a7a7a" stroke-width="1.1"/><path d="M1 9V13.5C1 14.5 1.5 15 2.5 15H11.5C12.5 15 13 14.5 13 13.5V9M7 15V16.5" fill="none" stroke="#7a7a7a" stroke-width="1.1"/></svg>
<svg style="left:43px;top:3px" width="10" height="9" viewBox="0 0 10 9"><path d="M0.5 3H3L6.5 0.5V8.5L3 6H0.5Z" fill="#5e5e5e"/><path d="M7.5 2.5A2.5 2.5 0 0 1 7.5 6.5" fill="none" stroke="#5e5e5e" stroke-width="1"/></svg>
<svg style="left:43px;top:16.5px" width="10" height="11" viewBox="0 0 10 11"><path d="M4.5 5V3.2C4.5 1.6 5.6 0.8 6.8 0.8C8 0.8 9 1.6 9 3.2" fill="none" stroke="#5e5e5e" stroke-width="1.1"/><rect x="0.5" y="5" width="8.5" height="6" fill="#5e5e5e"/></svg>
</div>
<div class="a" style="left:56px;top:655px;width:1058px;height:59px;background:#282d42;border-bottom:1px dotted #3e4466"></div>
<div class="a" style="left:56px;top:655px;width:1058px;height:2px;background:#1c2236"></div>
<svg style="left:56px;top:657px" width="856" height="42" viewBox="56 657 856 42"><defs><pattern id="ipat" width="3.6" height="3.6" patternUnits="userSpaceOnUse"><rect width="3.6" height="3.6" fill="#5438cc"/><rect x="0.9" y="0.9" width="1.7" height="1.7" rx="0.4" fill="#8a7ae6"/></pattern><linearGradient id="tg" x1="0" y1="0" x2="1" y2="0"><stop offset="0" stop-color="#c2c0c2"/><stop offset="0.25" stop-color="#d2d0d2"/><stop offset="1" stop-color="#d0ced0"/></linearGradient></defs><rect x="56" y="657" width="16" height="42" fill="url(#tg)"/><path d="M56 682C60 684 66 690 70 699H56Z" fill="#b98a80"/><rect x="72" y="657" width="84" height="42" fill="url(#tg)"/><path d="M73 699L74 684C73 678 75 670 78 667C79 666 80 667 80 670L81 675L83 668C84 666 86 666 86 668L85 677L88 672C89 671 90 672 89.5 674L86 686L84 699Z" fill="#b98a80"/><path d="M156 699L156 672C153 668 150 669 149 672L147 670C145 668 143 669 143 671L142 673C140 672 138 673 139 676L144 688L146 699Z" fill="#b98a80"/><g><rect x="97.3" y="666" width="15.5" height="29.0" rx="2" fill="#2b2b30"/><rect x="98.6" y="667.8" width="12.9" height="25.4" rx="1" fill="url(#ipat)"/></g><g><rect x="118.2" y="668" width="13.8" height="27.0" rx="2" fill="#2b2b30"/><rect x="119.5" y="669.8" width="11.2" height="23.4" rx="1" fill="url(#ipat)"/></g><rect x="156" y="657" width="84" height="42" fill="url(#tg)"/><g><rect x="182.5" y="679" width="14.2" height="15.6" rx="2" fill="#2b2b30"/><rect x="183.8" y="680.8" width="11.6" height="12.0" rx="1" fill="url(#ipat)"/></g><path d="M160 699C164 690 170 684 176 678C180 672 184 666 190 663C196 660 202 661 203 664L200 668C196 672 192 676 188 684C186 690 182 696 180 699Z" fill="#b98a80"/><path d="M162 699L165 688L181 690L178 699Z" fill="#303034"/><path d="M219 699C218 692 220 686 224 683C230 681 236 686 239 692L240 699Z" fill="#b98a80"/><g transform="rotate(-8 207.5 680.75)"><rect x="198" y="663.5" width="19.0" height="34.5" rx="2" fill="#2b2b30"/><rect x="199.3" y="665.3" width="16.4" height="30.9" rx="1" fill="url(#ipat)"/></g><rect x="240" y="657" width="84" height="42" fill="url(#tg)"/><path d="M240 699L240 684C244 680 248 676 252 675C256 674 258 676 262 679C262 684 258 690 256 699Z" fill="#b98a80"/><path d="M285 680C288 678 292 681 300 684L304 680C306 676 309 674 311 675C314 678 316 684 320 690L323 699H290Z" fill="#b98a80"/><g><rect x="265.4" y="666" width="15.2" height="29.0" rx="2" fill="#2b2b30"/><rect x="266.7" y="667.8" width="12.6" height="25.4" rx="1" fill="url(#ipat)"/></g><g><rect x="287.1" y="665" width="15.1" height="29.0" rx="2" fill="#2b2b30"/><rect x="288.4" y="666.8" width="12.5" height="25.4" rx="1" fill="url(#ipat)"/></g><rect x="324" y="657" width="84" height="42" fill="url(#tg)"/><path d="M368 681C372 679 376 682 385 686L388 680C390 676 393 674 395 675C399 680 403 688 407 699H374Z" fill="#b98a80"/><path d="M408 699C410 690 413 684 416 681C420 683 423 690 424 699Z" fill="#b98a80"/><g><rect x="349.6" y="666" width="15.6" height="29.0" rx="2" fill="#2b2b30"/><rect x="350.9" y="667.8" width="13.0" height="25.4" rx="1" fill="url(#ipat)"/></g><g><rect x="370.6" y="665" width="14.9" height="29.0" rx="2" fill="#2b2b30"/><rect x="371.9" y="666.8" width="12.3" height="25.4" rx="1" fill="url(#ipat)"/></g><rect x="408" y="657" width="84" height="42" fill="url(#tg)"/><path d="M414 699C416 688 422 680 428 677C432 678 436 682 436 686L433 690L432 699Z" fill="#b98a80"/><path d="M453 699C454 692 456 686 460 682C468 678 476 676 482 680C486 686 488 692 489 699Z" fill="#b98a80"/><g><rect x="429.7" y="663.5" width="18.9" height="32.1" rx="2" fill="#2b2b30"/><rect x="431.0" y="665.3" width="16.3" height="28.5" rx="1" fill="#a9c2bd"/></g><g><rect x="455.4" y="664.4" width="16.9" height="29.8" rx="2" fill="#2b2b30"/><rect x="456.7" y="666.2" width="14.3" height="26.2" rx="1" fill="#e2ddf6"/></g><rect x="492" y="657" width="84" height="42" fill="url(#tg)"/><path d="M496 699C498 690 502 683 508 678C512 677 515 680 515 684L512 699Z" fill="#b98a80"/><path d="M535 699C536 690 540 684 548 680C556 677 566 680 570 688C572 692 573 696 573 699Z" fill="#b98a80"/><g><rect x="514.2" y="662.1" width="16.9" height="33.5" rx="2" fill="#2b2b30"/><rect x="515.5" y="663.9" width="14.3" height="29.9" rx="1" fill="#a9c2bd"/></g><g><rect x="537.2" y="664.2" width="16.3" height="31.1" rx="2" fill="#2b2b30"/><rect x="538.5" y="666.0" width="13.7" height="27.5" rx="1" fill="#e2ddf6"/></g><rect x="576" y="657" width="84" height="42" fill="url(#tg)"/><path d="M581 699C583 690 588 682 596 678C600 677 602 680 601 684L598 699Z" fill="#b98a80"/><path d="M640 699C640 690 642 684 648 679C654 678 658 684 660 690V699Z" fill="#b98a80"/><g><rect x="600.1" y="661.5" width="18.9" height="37.2" rx="2" fill="#2b2b30"/><rect x="601.4" y="663.3" width="16.3" height="33.6" rx="1" fill="#a9c2bd"/></g><g><rect x="622.3" y="663.5" width="17.3" height="34.5" rx="2" fill="#2b2b30"/><rect x="623.6" y="665.3" width="14.7" height="30.9" rx="1" fill="#e2ddf6"/></g><rect x="660" y="657" width="84" height="42" fill="url(#tg)"/><path d="M672 699C671 690 672 680 676 672C680 668 682 672 683 676C688 682 694 684 697 690L694 699Z" fill="#b98a80"/><path d="M704 688C708 680 716 676 726 680C732 684 740 690 744 699H706Z" fill="#b98a80"/><g transform="rotate(-5 686.95 678.05)"><rect x="677.5" y="661.5" width="18.9" height="33.1" rx="2" fill="#2b2b30"/><rect x="678.8" y="663.3" width="16.3" height="29.5" rx="1" fill="url(#ipat)"/></g><g><rect x="707.3" y="663.1" width="16.5" height="31.9" rx="2" fill="#2b2b30"/><rect x="708.6" y="664.9" width="13.9" height="28.3" rx="1" fill="url(#ipat)"/></g><rect x="744" y="657" width="84" height="42" fill="url(#tg)"/><path d="M751 699C756 692 762 686 766 680C768 672 772 664 778 661C786 659 794 662 796 667C794 674 788 682 782 690C778 694 776 697 775 699Z" fill="#b98a80"/><g><rect x="776.5" y="686.5" width="10.8" height="6.8" rx="2" fill="#2b2b30"/><rect x="777.8" y="688.3" width="8.2" height="3.2" rx="1" fill="url(#ipat)"/></g><path d="M759 694L761 683L775 688L773 697Z" fill="#2a2a2c"/><rect x="803.5" y="673" width="22.4" height="6.7" rx="1" fill="#3c3c3e"/><path d="M805 685C810 683 818 686 822 690C825 694 826 697 826 699H810Z" fill="#b98a80"/><g><rect x="790.7" y="667.6" width="13.5" height="27.0" rx="2" fill="#2b2b30"/><rect x="792.0" y="669.4" width="10.9" height="23.4" rx="1" fill="url(#ipat)"/></g><rect x="828" y="657" width="84" height="42" fill="url(#tg)"/><rect x="886.8" y="673" width="23" height="6.7" rx="1" fill="#3c3c3e"/><rect x="828" y="688" width="84" height="7.3" fill="#f6f6f8"/><circle cx="836.7" cy="691.5" r="2.7" fill="#2e3a6a"/><rect x="841" y="690.5" width="10" height="1.6" fill="#c8d0e8"/><rect x="890" y="690.5" width="10" height="1.6" fill="#b0b0b8"/><path d="M892 684C896 683 902 688 908 694L911 699H896Z" fill="#b98a80"/><g><rect x="853.6" y="664.4" width="14.2" height="25.6" rx="2" fill="#2b2b30"/><rect x="854.9" y="666.2" width="11.6" height="22.0" rx="1" fill="url(#ipat)"/></g><g><rect x="872.6" y="666.9" width="13.5" height="23.1" rx="2" fill="#2b2b30"/><rect x="873.9" y="668.7" width="10.9" height="19.5" rx="1" fill="url(#ipat)"/></g></svg>
<svg style="left:912px;top:657px" width="201" height="42" viewBox="912 657 201 42"><rect x="912" y="657" width="201" height="42" fill="#030f15"/><ellipse cx="950" cy="675" rx="32" ry="16" fill="#071a22" opacity="0.6"/><ellipse cx="1030" cy="680" rx="28" ry="14" fill="#071a22" opacity="0.5"/><ellipse cx="1095" cy="672" rx="20" ry="12" fill="#071a22" opacity="0.4"/><g fill="#d8dde0"><rect x="962.4" y="668.5" width="19.5" height="2.2" opacity="0.6"/><circle cx="964.5" cy="679.6" r="1.1" opacity="0.8"/><circle cx="972.2" cy="679.6" r="1.1" opacity="0.8"/><circle cx="979.8" cy="679.6" r="1.1" opacity="0.8"/><rect x="964.9" y="688.8" width="11" height="0.9" opacity="0.7"/><rect x="1046.6" y="668.5" width="19.5" height="2.2" opacity="0.6"/><circle cx="1048.2" cy="679.6" r="1.3" opacity="0.85"/><circle cx="1056.3" cy="679.6" r="1.3" opacity="0.85"/><circle cx="1064.4" cy="679.6" r="1.3" opacity="0.85"/><rect x="1049" y="688.8" width="14.5" height="0.9" opacity="0.7"/></g><g fill="#8a9ab0" opacity="0.6"><rect x="963" y="682" width="4" height="0.8"/><rect x="970" y="682" width="4" height="0.8"/><rect x="978" y="682" width="4" height="0.8"/><rect x="1046" y="682" width="4" height="0.8"/><rect x="1054" y="682" width="4" height="0.8"/><rect x="1062" y="682" width="4" height="0.8"/></g></svg>
<div class="a" style="left:56px;top:750px;width:25px;height:30px;background:#2a3248;"></div>
<div class="a" style="left:56px;top:750px;width:25px;height:30px;background-image:repeating-linear-gradient(90deg,#454a68 0 1px,transparent 1px 3px),repeating-linear-gradient(90deg,#454a68 0 1px,transparent 1px 3px),repeating-linear-gradient(180deg,#454a68 0 1px,transparent 1px 3px),repeating-linear-gradient(180deg,#454a68 0 1px,transparent 1px 3px);background-size:100% 1px,100% 1px,1px 100%,1px 100%;background-position:0 0,0 100%,0 0,100% 0;background-repeat:no-repeat"></div>
<div class="a" style="left:56px;top:750px;width:21px;height:30px;overflow:hidden"><div class="t" style="left:3px;top:9px;font-size:13px;color:#4f9be8">wil</div></div>
<div class="a" style="left:92px;top:750px;width:228px;height:30px;background:#2a3248;"></div>
<div class="a" style="left:92px;top:750px;width:228px;height:30px;background-image:repeating-linear-gradient(90deg,#454a68 0 1px,transparent 1px 3px),repeating-linear-gradient(90deg,#454a68 0 1px,transparent 1px 3px),repeating-linear-gradient(180deg,#454a68 0 1px,transparent 1px 3px),repeating-linear-gradient(180deg,#454a68 0 1px,transparent 1px 3px);background-size:100% 1px,100% 1px,1px 100%,1px 100%;background-position:0 0,0 100%,0 0,100% 0;background-repeat:no-repeat"></div>
<div class="a" style="left:94px;top:752px;width:22px;height:26px;background:#c9c8cd"></div><svg style="left:94px;top:752px" width="22" height="26"><path d="M3.2 9.8V6.4H19V9.8" fill="none" stroke="#3b5bb2" stroke-width="1.1"/><path d="M3.2 6.4H19" stroke="#3b5bb2" stroke-width="1.8"/><path d="M10.3 6.4H12.5V21.5L11.4 23L10.3 21.5Z" fill="#3b5bb2"/></svg>
<div class="a" style="left:92px;top:750px;width:224px;height:30px;overflow:hidden"><div class="t" style="left:30px;top:9px;font-size:13px;color:#4f9be8">And it will move all the app data in the new phone</div></div>
<div class="a" style="left:321px;top:750px;width:140px;height:30px;background:#2a3248;"></div>
<div class="a" style="left:321px;top:750px;width:140px;height:30px;background-image:repeating-linear-gradient(90deg,#454a68 0 1px,transparent 1px 3px),repeating-linear-gradient(90deg,#454a68 0 1px,transparent 1px 3px),repeating-linear-gradient(180deg,#454a68 0 1px,transparent 1px 3px),repeating-linear-gradient(180deg,#454a68 0 1px,transparent 1px 3px);background-size:100% 1px,100% 1px,1px 100%,1px 100%;background-position:0 0,0 100%,0 0,100% 0;background-repeat:no-repeat"></div>
<div class="a" style="left:323px;top:752px;width:22px;height:26px;background:#c9c8cd"></div><svg style="left:323px;top:752px" width="22" height="26"><path d="M3.2 9.8V6.4H19V9.8" fill="none" stroke="#3b5bb2" stroke-width="1.1"/><path d="M3.2 6.4H19" stroke="#3b5bb2" stroke-width="1.8"/><path d="M10.3 6.4H12.5V21.5L11.4 23L10.3 21.5Z" fill="#3b5bb2"/></svg>
<div class="a" style="left:321px;top:750px;width:136px;height:30px;overflow:hidden"><div class="t" style="left:30.5px;top:9px;font-size:13px;color:#4f9be8">You will need ios 14</div></div>
<div class="a" style="left:462px;top:750px;width:228px;height:30px;background:#2a3248;"></div>
<div class="a" style="left:462px;top:750px;width:228px;height:30px;background-image:repeating-linear-gradient(90deg,#454a68 0 1px,transparent 1px 3px),repeating-linear-gradient(90deg,#454a68 0 1px,transparent 1px 3px),repeating-linear-gradient(180deg,#454a68 0 1px,transparent 1px 3px),repeating-linear-gradient(180deg,#454a68 0 1px,transparent 1px 3px);background-size:100% 1px,100% 1px,1px 100%,1px 100%;background-position:0 0,0 100%,0 0,100% 0;background-repeat:no-repeat"></div>
<div class="a" style="left:464px;top:752px;width:22px;height:26px;background:#c9c8cd"></div><svg style="left:464px;top:752px" width="22" height="26"><path d="M3.2 9.8V6.4H19V9.8" fill="none" stroke="#3b5bb2" stroke-width="1.1"/><path d="M3.2 6.4H19" stroke="#3b5bb2" stroke-width="1.8"/><path d="M10.3 6.4H12.5V21.5L11.4 23L10.3 21.5Z" fill="#3b5bb2"/></svg>
<div class="a" style="left:462px;top:750px;width:224px;height:30px;overflow:hidden"><div class="t" style="left:30px;top:9px;font-size:13px;color:#4f9be8">Evenly display settings are the same</div></div>
<div class="a" style="left:699px;top:750px;width:185px;height:30px;background:#3f5899;border:1px solid #d6cf45;"></div>
<div class="a" style="left:701px;top:752px;width:22px;height:26px;background:#c9c8cd"></div><svg style="left:701px;top:752px" width="22" height="26"><path d="M3.2 9.8V6.4H19V9.8" fill="none" stroke="#3b5bb2" stroke-width="1.1"/><path d="M3.2 6.4H19" stroke="#3b5bb2" stroke-width="1.8"/><path d="M10.3 6.4H12.5V21.5L11.4 23L10.3 21.5Z" fill="#3b5bb2"/></svg>
<div class="a" style="left:699px;top:750px;width:181px;height:30px;overflow:hidden"><div class="t" style="left:30.5px;top:9px;font-size:13px;color:#4f9be8">And of course, I linked this video</div></div>
<div class="a" style="left:698px;top:640px;width:1px;height:231px;background:#2c9ad6"></div>
<svg style="left:694px;top:639px" width="9" height="11"><path d="M0.5 0.5H8.5V7L4.5 10.5L0.5 7Z" fill="#4aa4e0"/></svg>
<div class="a" style="left:0;top:889px;width:1360px;height:2px;background:#2e2e2e"></div>
<svg style="left:62px;top:874px" width="8" height="8"><path d="M7 0.5V7.5L0.5 4Z" fill="#555"/></svg>
<div class="a" style="left:783px;top:874px;width:278px;height:6px;border-radius:3px;background:#6e6e6e"></div>
<svg style="left:1329px;top:874px" width="8" height="8"><path d="M0.5 0.5V7.5L7.5 4Z" fill="#444"/></svg>
<svg style="left:1344px;top:659px" width="9" height="8"><path d="M0.5 7.5H8.5L4.5 0.5Z" fill="#777"/></svg>
<div class="a" style="left:1345px;top:670px;width:7px;height:178px;border-radius:3.5px;background:#8a8a8a"></div>
<svg style="left:1344px;top:860px" width="9" height="8"><path d="M0.5 0.5H8.5L4.5 7.5Z" fill="#777"/></svg>
<svg style="left:1347px;top:877px" width="12" height="13"><rect x="9" y="1" width="2" height="2" fill="#cfcfcf"/><rect x="6" y="4" width="2" height="2" fill="#cfcfcf"/><rect x="9" y="4" width="2" height="2" fill="#cfcfcf"/><rect x="3" y="7" width="2" height="2" fill="#cfcfcf"/><rect x="6" y="7" width="2" height="2" fill="#cfcfcf"/><rect x="9" y="7" width="2" height="2" fill="#cfcfcf"/><rect x="0" y="10" width="2" height="2" fill="#cfcfcf"/><rect x="3" y="10" width="2" height="2" fill="#cfcfcf"/><rect x="6" y="10" width="2" height="2" fill="#cfcfcf"/><rect x="9" y="10" width="2" height="2" fill="#cfcfcf"/></svg>
<!-- /TRACKS -->
</body></html>
